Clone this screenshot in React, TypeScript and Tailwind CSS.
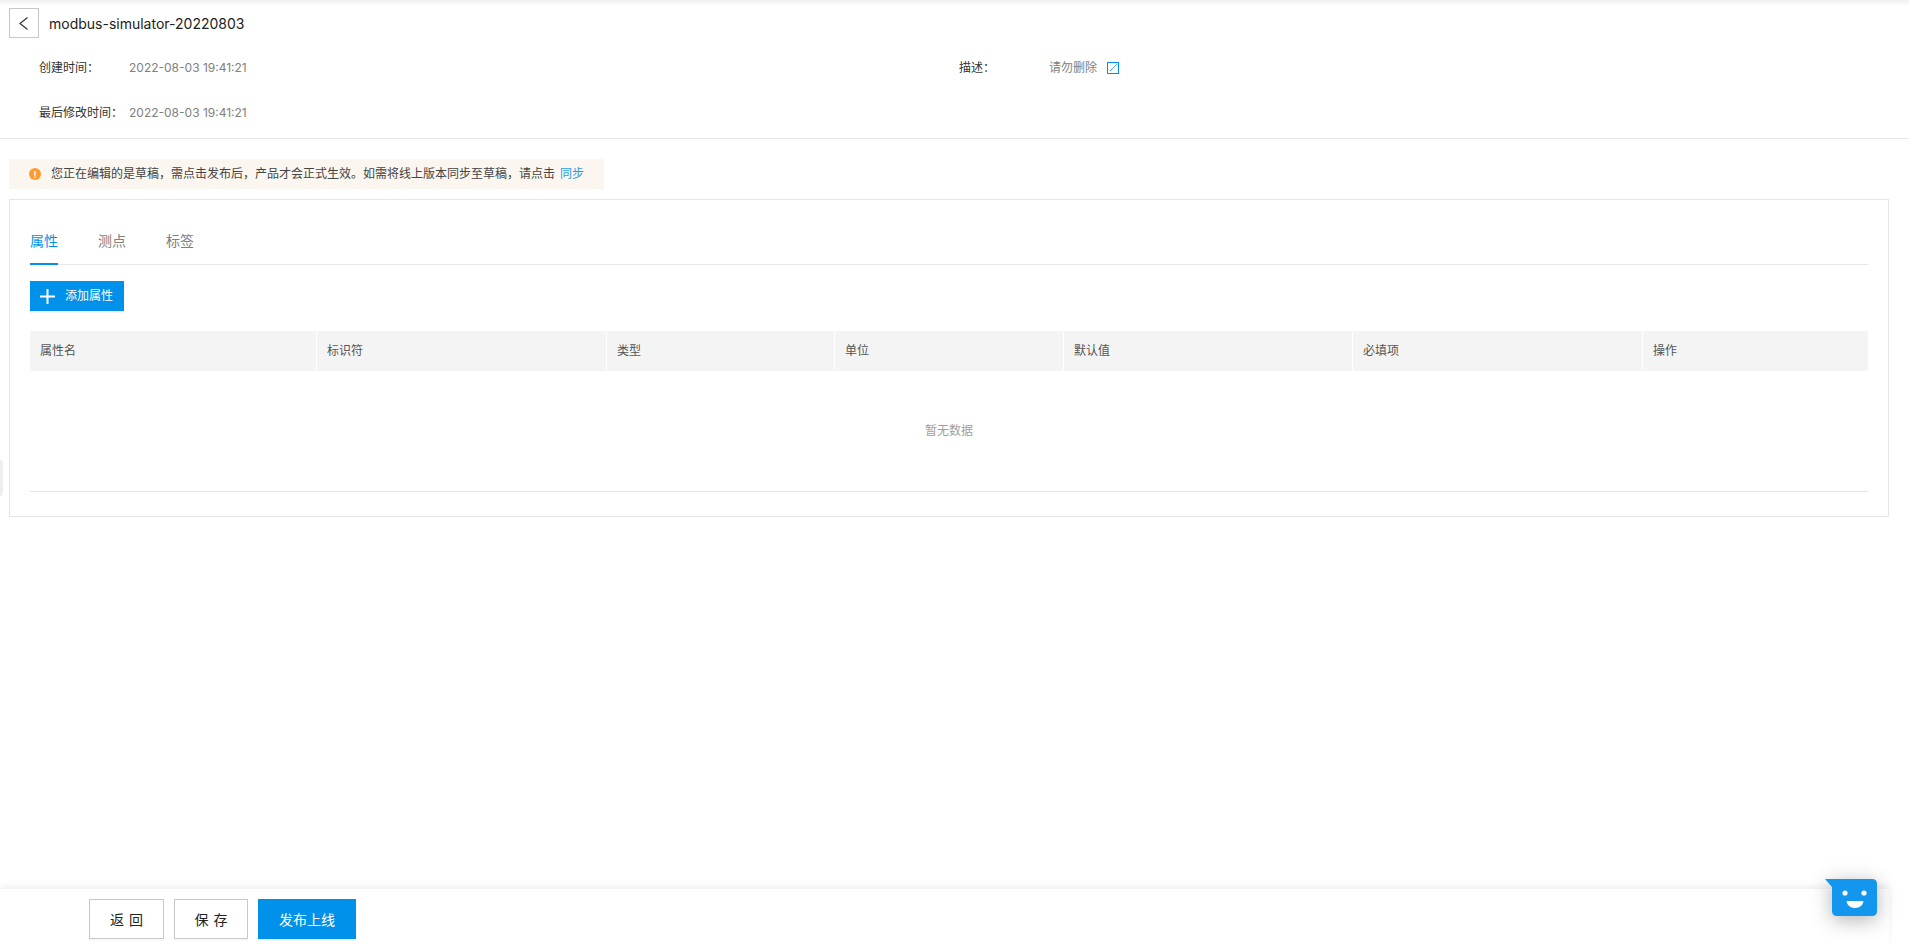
const columns = ["属性名", "标识符", "类型", "单位", "默认值", "必填项", "操作"];

const InfoRow = ({ label, value }: { label: string; value: string }) => (
  <div className="flex items-center h-5">
    <span className="w-[90px] text-[#333]">{label}</span>
    <span className="text-[#808080]">{value}</span>
  </div>
);

const SmileBot = () => (
  <div className="absolute left-[1825px] top-[879px] w-[52px] h-[37px] drop-shadow-[0_4px_10px_rgba(0,0,0,0.3)]">
    <svg viewBox="0 0 52 37" className="w-full h-full">
      <path d="M0 0 H47 Q52 0 52 5 V32 Q52 37 47 37 H12 Q7 37 7 32 V8 Z" fill="#1296ee" />
      <circle cx="20" cy="14" r="2.6" fill="#fff" />
      <circle cx="39" cy="14" r="2.6" fill="#fff" />
      <path d="M21.5 22 H38.5 Q37.5 29 30 29 Q22.5 29 21.5 22 Z" fill="#fff" />
    </svg>
  </div>
);

export default function App() {
  return (
    <div className="relative flex flex-col h-screen overflow-hidden bg-white text-[12px] font-['Inter','Noto_Sans_CJK_SC',sans-serif]">
      <div className="h-[6px] -mb-[6px] bg-gradient-to-b from-[#efefef] to-white" />

      {/* header */}
      <div className="h-[139px] shrink-0 border-b border-[#e5e5e5] pt-[8px]">
        <div className="flex items-center pl-[9px]">
          <button className="w-[30px] h-[30px] flex items-center justify-center border border-[#c8c8c8] text-[#333]">
            <svg viewBox="0 0 9 13" className="w-[9px] h-[13px] -translate-x-[1px]" fill="none" stroke="currentColor" strokeWidth="1.2">
              <path d="M8.5 .5 1 6.5l7.5 6" />
            </svg>
          </button>
          <h1 className="ml-[10px] text-[14px] text-[#222]">modbus-simulator-20220803</h1>
        </div>
        <div className="grid grid-cols-[920px_1fr] pl-[39px] mt-[20px]">
          <div className="flex flex-col gap-[25px]">
            <InfoRow label="创建时间：" value="2022-08-03 19:41:21" />
            <InfoRow label="最后修改时间：" value="2022-08-03 19:41:21" />
          </div>
          <div className="flex items-center h-5">
            <span className="w-[90px] text-[#333]">描述：</span>
            <span className="text-[#808080]">请勿删除</span>
            <svg viewBox="0 0 12 12" className="ml-[10px] w-3 h-3 text-[#0091ea]" fill="none" stroke="currentColor">
              <rect x=".5" y=".5" width="11" height="11" />
              <path d="M3 9 10 2" strokeDasharray="1.2 .4" />
            </svg>
          </div>
        </div>
      </div>

      {/* draft notice */}
      <div className="flex items-center w-[595px] h-[30px] ml-[9px] mt-[20px] pl-[20px] bg-[#fbf6f0] text-[#444]">
        <span className="flex items-center justify-center w-3 h-3 rounded-full bg-[#ff9a2e] text-white text-[9px] font-bold leading-none">!</span>
        <span className="ml-[10px]">您正在编辑的是草稿，需点击发布后，产品才会正式生效。如需将线上版本同步至草稿，请点击</span>
        <span className="ml-[5px] text-[#2d9ceb]">同步</span>
      </div>

      {/* card */}
      <div className="h-[318px] ml-[9px] mr-[20px] mt-[10px] border border-[#e6e6e6] px-[20px]">
        <div className="flex h-[65px] pt-[30px] border-b border-[#e8e8e8] text-[14px] text-[#808080]">
          <div className="relative h-[34px] leading-[20px] pt-[1px] text-[#0091ea]">
            属性
            <div className="absolute left-0 right-0 -bottom-[1px] h-[2px] bg-[#0091ea]" />
          </div>
          <div className="ml-[40px] leading-[20px] pt-[1px]">测点</div>
          <div className="ml-[40px] leading-[20px] pt-[1px]">标签</div>
        </div>

        <button className="flex items-center w-[94px] h-[30px] mt-[16px] pl-[10px] bg-[#0091ea] text-white shadow-[0_2px_0_#f5f5f5]">
          <svg viewBox="0 0 15 15" className="w-[15px] h-[15px]" fill="none" stroke="currentColor" strokeWidth="2">
            <path d="M7.5 0v15M0 7.5h15" />
          </svg>
          <span className="ml-[10px]">添加属性</span>
        </button>

        <div className="grid grid-cols-[287px_290px_228px_229px_289px_290px_1fr] h-[40px] mt-[20px] bg-[#f4f4f4] text-[#555]">
          {columns.map((name) => (
            <div key={name} className="flex items-center pl-[10px] border-r border-white last:border-r-0">
              {name}
            </div>
          ))}
        </div>

        <div className="flex items-center justify-center h-[121px] border-b border-[#e5e5e5] text-[#a0a0a0]">
          暂无数据
        </div>
      </div>

      {/* side handle */}
      <div className="absolute left-0 top-[460px] w-[3px] h-[36px] rounded-r-sm bg-[#eeeeee]" />

      {/* footer */}
      <div className="flex items-start gap-[10px] mt-auto mr-[20px] h-[58px] pl-[89px] pt-[10px] shadow-[0_-3px_6px_rgba(0,0,0,0.06)] text-[14px]">
        <button className="w-[75px] h-[40px] pl-[5px] border border-[#c8c8c8] text-[#222] tracking-[5px] shadow-[0_2px_0_#f7f7f7]">返回</button>
        <button className="w-[74px] h-[40px] pl-[5px] border border-[#c8c8c8] text-[#222] tracking-[5px] shadow-[0_2px_0_#f7f7f7]">保存</button>
        <button className="w-[98px] h-[40px] bg-[#0091ea] text-white shadow-[0_2px_0_#f7f7f7]">发布上线</button>
      </div>

      <SmileBot />
    </div>
  );
}
